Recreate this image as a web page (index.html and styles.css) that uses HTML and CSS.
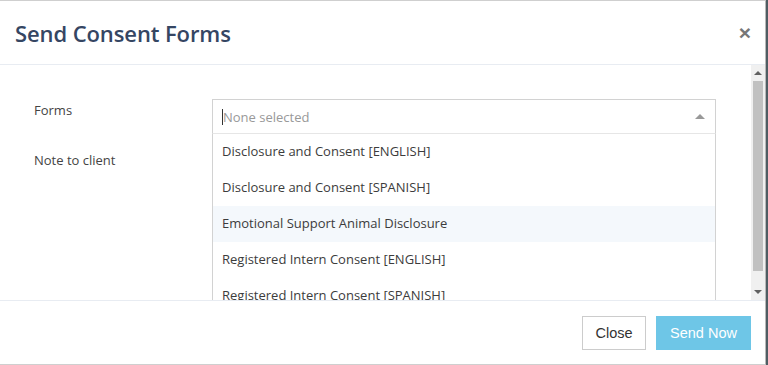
FILE: index.html
```html
<!DOCTYPE html>
<html>
<head>
<title>Send Consent Forms</title>
<link rel="stylesheet" href="styles.css">
</head>
<body>
    <div class="modal">
        <div class="modal-header">
            <h4 class="modal-title">Send Consent Forms</h4>
            <span class="close">&times;</span>
        </div>

        <div class="modal-scroll">
            <div class="modal-body">
                <div class="form-row">
                    <label class="form-label">Forms</label>
                    <div class="select-wrap">
                        <div class="select-box">
                            <span class="caret-line"></span>
                            <span class="placeholder">None selected</span>
                            <span class="arrow-up"></span>
                        </div>
                        <ul class="dropdown">
                            <li>Disclosure and Consent [ENGLISH]</li>
                            <li>Disclosure and Consent [SPANISH]</li>
                            <li class="active">Emotional Support Animal Disclosure</li>
                            <li>Registered Intern Consent [ENGLISH]</li>
                            <li>Registered Intern Consent [SPANISH]</li>
                        </ul>
                    </div>
                </div>
                <div class="form-row">
                    <label class="form-label">Note to client</label>
                    <div class="note-box"></div>
                </div>
            </div>
            <div class="scrollbar">
                <span class="sb-up"></span>
                <div class="sb-track"><div class="sb-thumb"></div></div>
                <span class="sb-down"></span>
            </div>
        </div>

        <div class="modal-footer">
            <button class="btn btn-default">Close</button>
            <button class="btn btn-info">Send Now</button>
        </div>
    </div>
</body>
</html>
```

FILE: styles.css
```css
body {
    margin: 0;
    background-color: #4f5d63;
    font-family: "Open Sans", sans-serif;
}

.modal {
    width: 765px;
    height: 363px;
    background-color: white;
    border-top: 1px solid #cfcfcf;
    border-right: 1px solid #b8b8b8;
    border-bottom: 1px solid #cfcfcf;
    display: flex;
    flex-direction: column;
}

.modal-header {
    height: 63px;
    border-bottom: 1px solid #e8ecf2;
    display: flex;
    align-items: center;
    justify-content: space-between;
    padding: 0 15px 0 15px;
}

.modal-title {
    margin: 0;
    font-size: 22px;
    font-weight: 600;
    color: #354663;
    letter-spacing: -0.1px;
}

.close {
    font-family: "Liberation Sans", sans-serif;
    font-size: 21px;
    font-weight: bold;
    color: #777;
    line-height: 1;
    margin-right: -1px;
}

.modal-scroll {
    height: 235px;
    display: flex;
    overflow: hidden;
}

.modal-body {
    flex: 1;
    padding: 34px 35px 0 34px;
    position: relative;
}

.form-row {
    display: flex;
    height: 50px;
}

.form-label {
    width: 178px;
    font-size: 13px;
    color: #444;
    padding-top: 2px;
}

.select-wrap {
    position: relative;
    width: 504px;
}

.select-box {
    height: 33px;
    border: 1px solid #d2d2d2;
    border-bottom-color: #e6e6e6;
    display: flex;
    align-items: center;
    padding-left: 9px;
    position: relative;
}

.caret-line {
    width: 1px;
    height: 16px;
    background-color: #333;
}

.placeholder {
    font-size: 13px;
    color: #999;
}

.arrow-up {
    position: absolute;
    right: 10px;
    top: 14px;
    border-left: 5px solid transparent;
    border-right: 5px solid transparent;
    border-bottom: 5px solid #999;
}

.dropdown {
    position: absolute;
    top: 35px;
    left: 0;
    width: 502px;
    margin: 0;
    padding: 0;
    list-style: none;
    background-color: white;
    border-left: 1px solid #d2d2d2;
    border-right: 1px solid #d2d2d2;
    z-index: 2;
}

.dropdown li {
    height: 36px;
    line-height: 35px;
    padding-left: 9px;
    font-size: 13px;
    color: #3c3c3c;
}

.dropdown li.active {
    background-color: #f4f8fc;
}

.note-box {
    width: 504px;
}

.scrollbar {
    width: 14px;
    background-color: #f0f0f0;
    display: flex;
    flex-direction: column;
    align-items: center;
}

.sb-up, .sb-down {
    width: 0;
    height: 0;
    border-left: 4px solid transparent;
    border-right: 4px solid transparent;
    margin: 6px 0;
}

.sb-up {
    border-bottom: 4px solid #606060;
}

.sb-down {
    border-top: 4px solid #606060;
}

.sb-track {
    flex: 1;
    width: 100%;
    padding: 0 2px;
    box-sizing: border-box;
}

.sb-thumb {
    height: 190px;
    background-color: #c1c1c1;
}

.modal-footer {
    flex: 1;
    border-top: 1px solid #e8ecf2;
    display: flex;
    justify-content: flex-end;
    align-items: center;
    gap: 10px;
    padding: 0 14px 0 0;
}

.btn {
    font-family: "Liberation Sans", sans-serif;
    font-size: 14.5px;
    height: 34px;
    padding: 0 14px;
    border-radius: 0;
    cursor: pointer;
}

.btn-default {
    background-color: white;
    border: 1px solid #ccc;
    color: #333;
    width: 64px;
    padding: 0;
}

.btn-info {
    background-color: #6ec6e7;
    border: 1px solid #6ec6e7;
    color: white;
    width: 95px;
    padding: 0;
}
```
